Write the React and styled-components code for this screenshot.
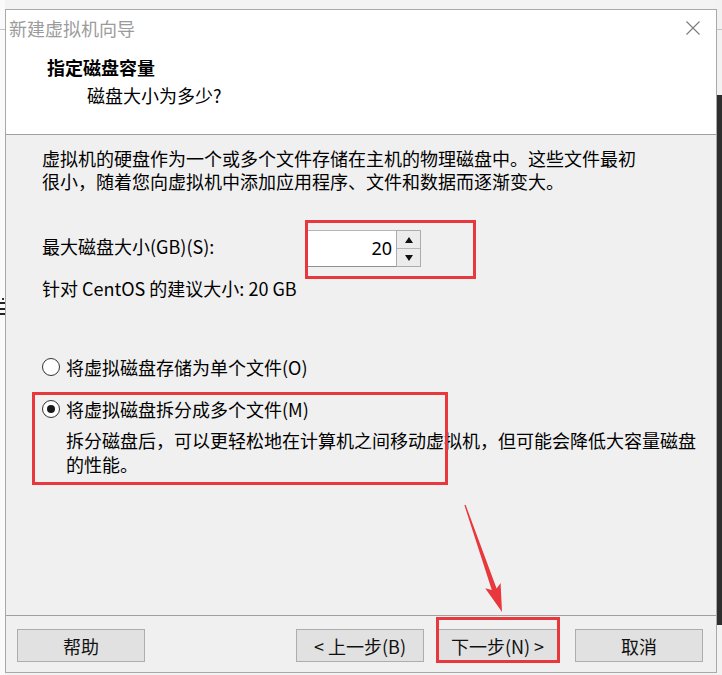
import React from "react";
import styled, { createGlobalStyle } from "styled-components";

const Global = createGlobalStyle`
  html, body { margin: 0; padding: 0; }
  body {
    background: #f3f3f3;
    font-family: "Noto Sans CJK SC", "Noto Sans", sans-serif;
  }
`;

const Page = styled.div`
  position: relative;
  width: 722px;
  height: 675px;
  display: flex;
  background: #f3f3f3;
  overflow: hidden;
`;

const Gutter = styled.div`
  width: ${(p) => p.$w}px;
  flex: none;
  display: flex;
  flex-direction: column;
  background: ${(p) => p.$bg};
`;

const GutterLine = styled.div`
  height: 1px;
  margin-top: ${(p) => p.$top}px;
  background: #c4c4c4;
`;

const GutterBlock = styled.div`
  height: ${(p) => p.$h}px;
  margin-top: ${(p) => p.$top || 0}px;
  background: ${(p) => p.$bg};
`;

const GutterMarks = styled.svg`
  display: block;
  margin-top: ${(p) => p.$top}px;
`;

const Window = styled.div`
  width: 710px;
  height: 662px;
  margin-top: 9px;
  border: 1px solid #a9a9a9;
  background: #f0f0f0;
  display: flex;
  flex-direction: column;
  flex: none;
`;

const Header = styled.div`
  height: 124px;
  background: #ffffff;
  border-bottom: 1px solid #a0a0a0;
  display: flex;
  flex-direction: column;
`;

const TitleBar = styled.div`
  height: 36px;
  display: flex;
  align-items: center;
  justify-content: space-between;
  padding: 0 16px 0 3px;
`;

const Title = styled.span`
  font-size: 18px;
  line-height: 24px;
  color: #9b9b9b;
`;

const CloseIcon = styled.svg`
  display: block;
`;

const Heading = styled.div`
  margin: 9px 0 0 41px;
  font-size: 18px;
  line-height: 24px;
  font-weight: 700;
  color: #000;
`;

const SubHeading = styled.div`
  margin: 4px 0 0 81px;
  font-size: 18px;
  line-height: 24px;
  color: #000;
`;

const Body = styled.div`
  flex: 1;
  padding: 12px 0 0 36px;
  display: flex;
  flex-direction: column;
`;

const Text = styled.div`
  font-size: 18px;
  line-height: ${(p) => p.$lh || 23}px;
  color: #000;
  margin-top: ${(p) => p.$top || 0}px;
  margin-left: ${(p) => p.$indent || 0}px;
`;

const FieldRow = styled.div`
  display: flex;
  align-items: center;
  height: 37px;
  margin-top: 37px;
`;

const FieldLabel = styled.span`
  width: 265px;
  font-size: 18px;
  line-height: 23px;
  margin-top: -5px;
`;

const Spin = styled.div`
  display: flex;
  height: 37px;
`;

const SpinInput = styled.div`
  width: 84px;
  height: 35px;
  border: 1px solid #b5b5b5;
  border-bottom-color: #8f8f8f;
  border-right: none;
  background: #fff;
  font-size: 18px;
  line-height: 35px;
  text-align: right;
  padding-right: 4px;
  font-family: "Noto Sans", "Noto Sans CJK SC", sans-serif;
`;

const SpinButtons = styled.div`
  width: 23px;
  border: 1px solid #acacac;
  display: flex;
  flex-direction: column;
`;

const SpinButton = styled.div`
  flex: 1;
  background: #ececec;
  display: flex;
  align-items: center;
  justify-content: center;
  border-top: ${(p) => (p.$down ? "1px solid #b8b8b8" : "none")};
`;

const Arrow = styled.span`
  width: 0;
  height: 0;
  border-left: 4.5px solid transparent;
  border-right: 4.5px solid transparent;
  ${(p) =>
    p.$down
      ? "border-top: 6px solid #111;"
      : "border-bottom: 6px solid #111;"}
`;

const RadioRow = styled.div`
  display: flex;
  align-items: center;
  margin-top: ${(p) => p.$top}px;
  height: 24px;
`;

const RadioCircle = styled.span`
  width: 16px;
  height: 16px;
  border-radius: 50%;
  border: 1px solid #333;
  background: #fff;
  display: flex;
  align-items: center;
  justify-content: center;
  margin-right: 6px;
  &::after {
    content: "";
    width: 8px;
    height: 8px;
    border-radius: 50%;
    background: ${(p) => (p.$checked ? "#1a1a1a" : "transparent")};
  }
`;

const RadioLabel = styled.span`
  font-size: 18px;
  line-height: 24px;
  color: #000;
`;

const Footer = styled.div`
  height: 57px;
  border-top: 1px solid #a0a0a0;
  display: flex;
  align-items: flex-start;
  padding: 13px 13px 0 11px;
  box-sizing: border-box;
`;

const Spacer = styled.div`
  flex: 1;
`;

const Button = styled.div`
  width: ${(p) => p.$w || 126}px;
  height: 31px;
  margin-left: ${(p) => p.$ml || 0}px;
  background: #e1e1e1;
  border: 1px solid #adadad;
  display: flex;
  align-items: center;
  justify-content: center;
  font-size: 18px;
  color: #111;
  flex: none;
`;

const Overlay = styled.svg`
  position: absolute;
  left: 0;
  top: 0;
  pointer-events: none;
`;

const RED = "#e8383d";

export default function App() {
  return (
    <>
      <Global />
      <Page>
        <Gutter $w={5} $bg="#fafafa">
          <GutterLine $top={29} />
          <GutterMarks $top={268} width="5" height="20" viewBox="0 0 5 20">
            <rect x="2" y="0" width="2" height="2" fill="#333" />
            <rect x="0" y="4" width="5" height="2" fill="#222" />
            <rect x="0" y="10" width="5" height="2" fill="#222" />
            <rect x="0" y="15" width="5" height="2" fill="#222" />
          </GutterMarks>
        </Gutter>
        <Window>
          <Header>
            <TitleBar>
              <Title>新建虚拟机向导</Title>
              <CloseIcon width="14" height="14" viewBox="0 0 14 14">
                <path d="M0.5 0.5 L13.5 13.5 M13.5 0.5 L0.5 13.5" stroke="#7a7a7a" strokeWidth="1.1" fill="none" />
              </CloseIcon>
            </TitleBar>
            <Heading>指定磁盘容量</Heading>
            <SubHeading>磁盘大小为多少?</SubHeading>
          </Header>
          <Body>
            <Text>
              虚拟机的硬盘作为一个或多个文件存储在主机的物理磁盘中。这些文件最初
              <br />
              很小，随着您向虚拟机中添加应用程序、文件和数据而逐渐变大。
            </Text>
            <FieldRow>
              <FieldLabel>最大磁盘大小(GB)(S):</FieldLabel>
              <Spin>
                <SpinInput>20</SpinInput>
                <SpinButtons>
                  <SpinButton>
                    <Arrow />
                  </SpinButton>
                  <SpinButton $down>
                    <Arrow $down />
                  </SpinButton>
                </SpinButtons>
              </Spin>
            </FieldRow>
            <Text $top={10}>针对 CentOS 的建议大小: 20 GB</Text>
            <RadioRow $top={55}>
              <RadioCircle />
              <RadioLabel>将虚拟磁盘存储为单个文件(O)</RadioLabel>
            </RadioRow>
            <RadioRow $top={18}>
              <RadioCircle $checked />
              <RadioLabel>将虚拟磁盘拆分成多个文件(M)</RadioLabel>
            </RadioRow>
            <Text $top={7} $indent={24} $lh={24}>
              拆分磁盘后，可以更轻松地在计算机之间移动虚拟机，但可能会降低大容量磁盘
              <br />
              的性能。
            </Text>
          </Body>
          <Footer>
            <Button>帮助</Button>
            <Spacer />
            <Button>&lt; 上一步(B)</Button>
            <Button $w={119} $ml={13}>下一步(N) &gt;</Button>
            <Button $ml={17}>取消</Button>
          </Footer>
        </Window>
        <Gutter $w={5} $bg="#f2f2f2">
          <GutterLine $top={29} />
          <GutterBlock $top={65} $h={530} $bg="#2e2e2e" />
        </Gutter>
        <Overlay width="722" height="675" viewBox="0 0 722 675">
          <rect x="306.5" y="221.5" width="168" height="56" fill="none" stroke={RED} strokeWidth="3" />
          <rect x="33.5" y="393.5" width="413" height="90" fill="none" stroke={RED} strokeWidth="3" />
          <rect x="437.5" y="618.5" width="121" height="43" fill="none" stroke={RED} strokeWidth="3" />
          <polygon
            points="465.6,504.8 496.6,588.5 500.6,582.9 502,612 485.2,588.3 491.8,590.1 464.4,505.2"
            fill={RED}
          />
        </Overlay>
      </Page>
    </>
  );
}
